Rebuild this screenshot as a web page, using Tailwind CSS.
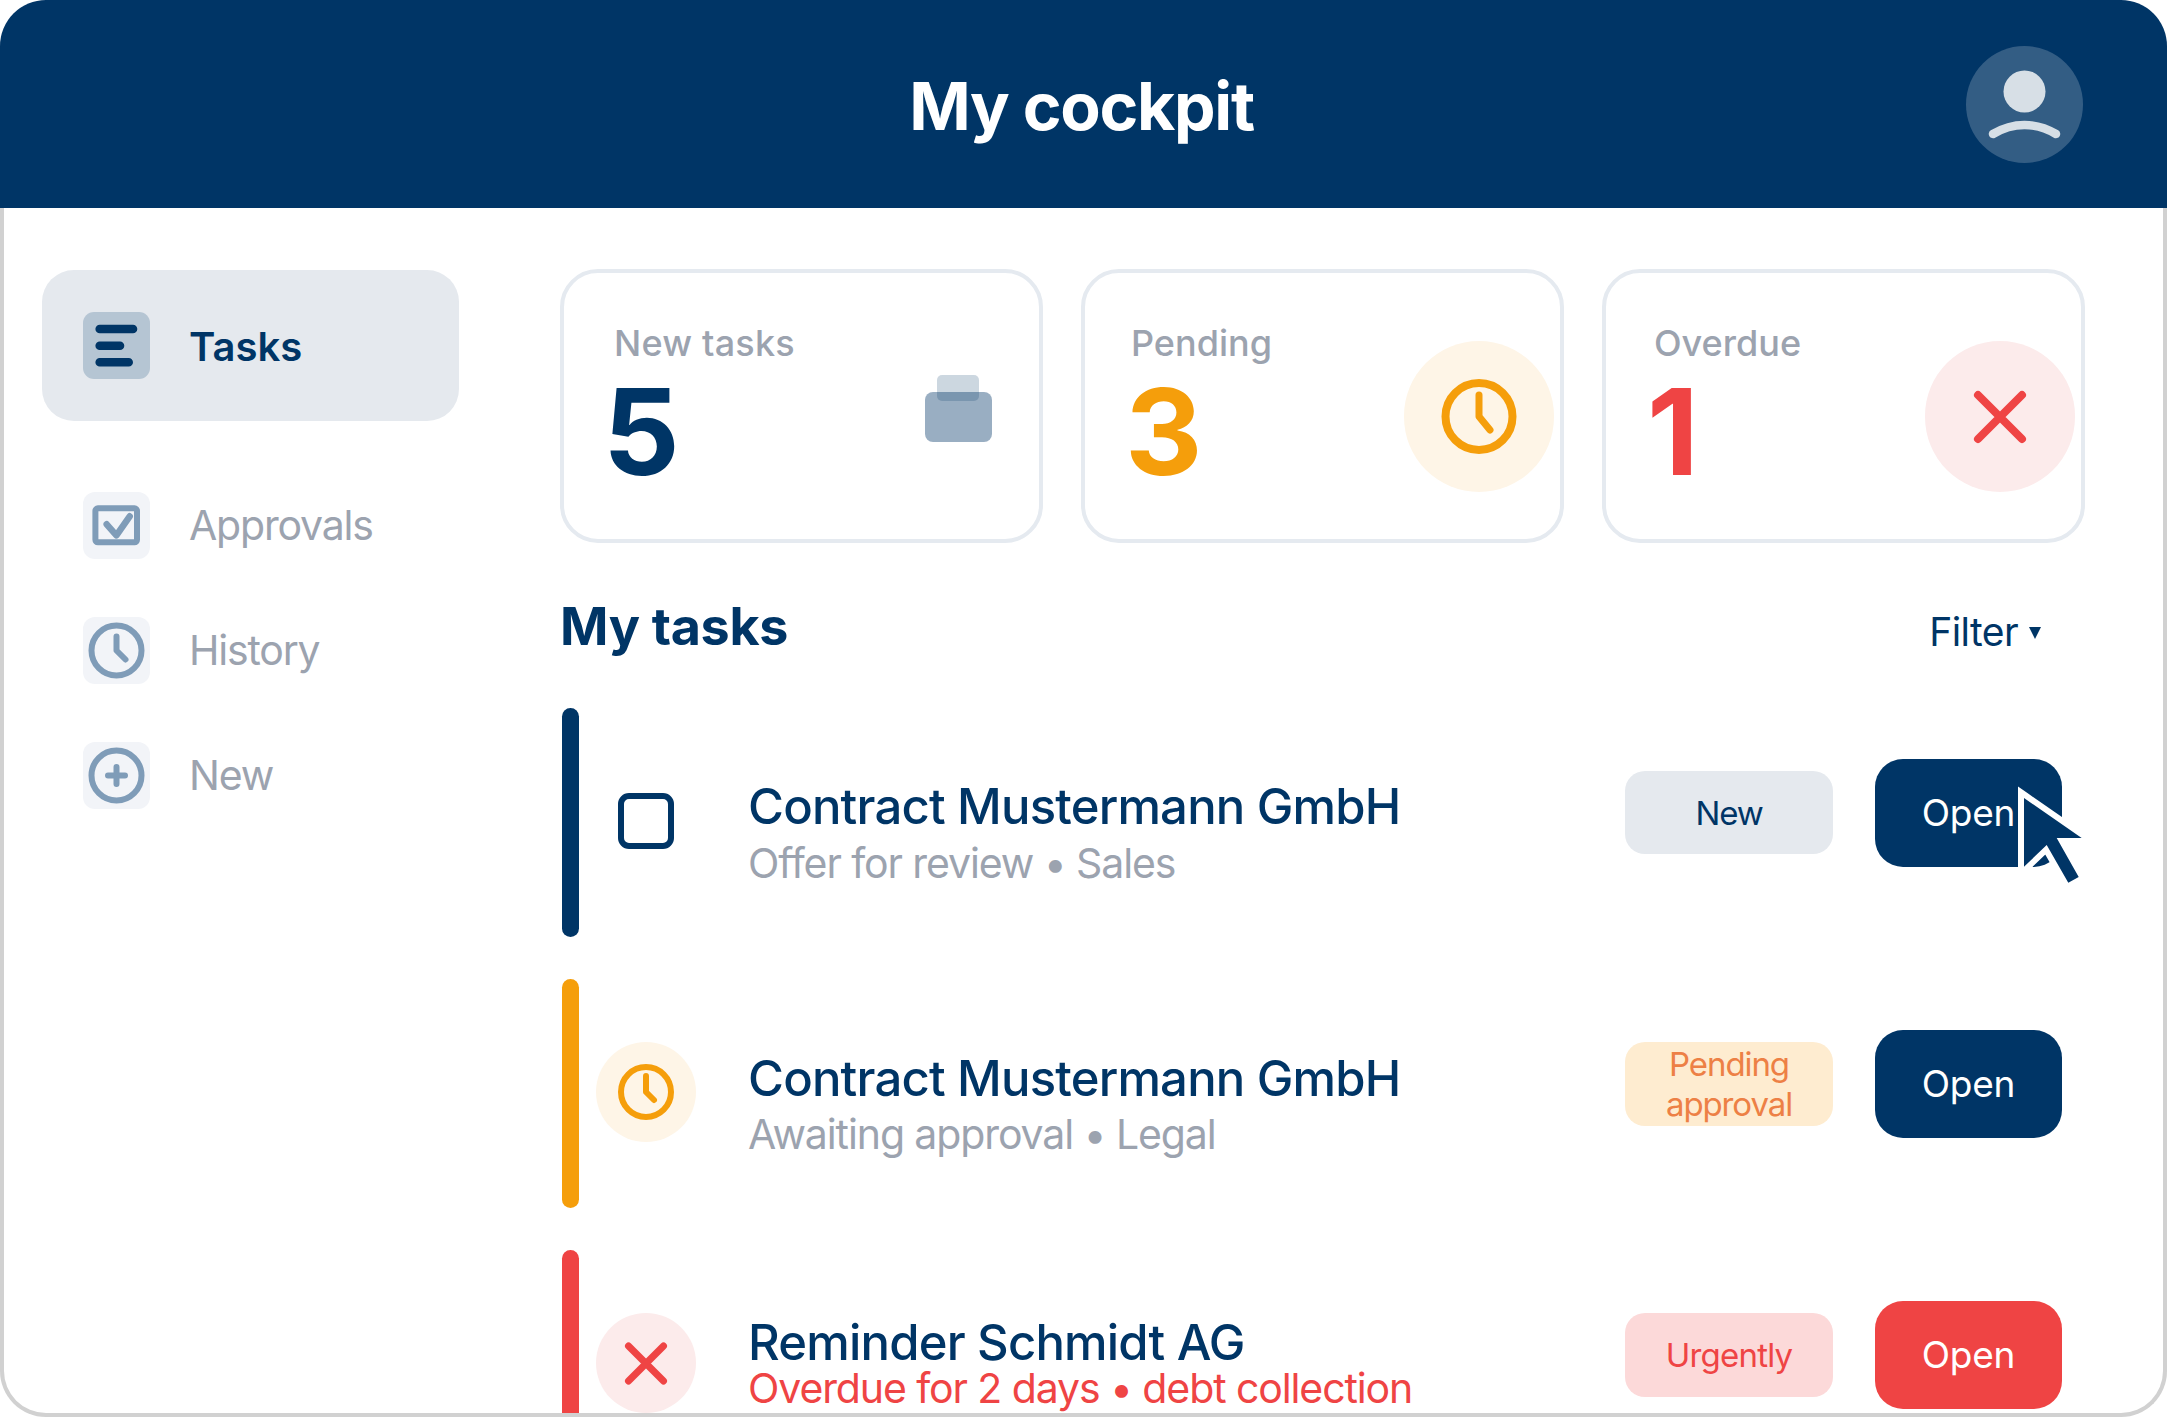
<!DOCTYPE html>
<html lang="en">
<head>
    <meta charset="UTF-8">
    <title>My cockpit</title>
    <script src="https://cdn.jsdelivr.net/npm/@tailwindcss/browser@4"></script>
</head>
<body class="bg-white font-['Inter',sans-serif] overflow-hidden">
<div class="w-[2167px] h-[1417px] flex flex-col">

    <!-- header -->
    <header class="relative h-[208px] shrink-0 bg-[#003566] rounded-t-[46px] flex items-center justify-center">
        <h1 class="text-[66px] leading-[80px] font-bold text-white tracking-[-1.3px] mt-[4px] mr-[4px]">My cockpit</h1>
        <div class="absolute left-[1966px] top-[46px] w-[117px] h-[117px] rounded-full bg-white/20">
            <svg width="117" height="117" viewBox="0 0 117 117" fill="none">
                <circle cx="58.5" cy="45.5" r="21" fill="#d7dfe6"/>
                <path d="M27 88 C47 76 70 76 90 88" stroke="#d7dfe6" stroke-width="8.5" stroke-linecap="round"/>
            </svg>
        </div>
    </header>

    <div class="relative flex-1 flex min-h-0 border-x-4 border-b-4 border-[#d1d1d1] rounded-b-[46px] overflow-hidden bg-white">

        <!-- sidebar -->
        <aside class="w-[417px] ml-[38px] mt-[62px] shrink-0">
            <div class="h-[151px] rounded-[32px] bg-[#e5e9ee] flex items-center pl-[41px]">
                <svg width="67" height="67" viewBox="0 0 67 67" fill="none" class="shrink-0">
                    <rect width="67" height="67" rx="11" fill="#b5c5d3"/>
                    <path d="M16.7 17H50M16.7 33.7H37M16.7 50.3H45.7" stroke="#003566" stroke-width="8.6" stroke-linecap="round"/>
                </svg>
                <span class="ml-[39px] mt-[2px] text-[40px] font-semibold text-[#003566]">Tasks</span>
            </div>
            <div class="mt-[71px] flex flex-col gap-[58px] pl-[41px]">
                <div class="flex items-center h-[67px]">
                    <svg width="67" height="67" viewBox="0 0 67 67" fill="none" class="shrink-0">
                        <rect width="67" height="67" rx="12" fill="#f2f4f8"/>
                        <rect x="12.4" y="16.3" width="41.6" height="34" rx="2.5" stroke="#7f9cb8" stroke-width="6"/>
                        <path d="M23.7 32.3L33.4 43.3L46.7 24.3" stroke="#7f9cb8" stroke-width="6.5" stroke-linecap="round" stroke-linejoin="round"/>
                    </svg>
                    <span class="ml-[39px] text-[41px] tracking-[-1.2px] text-[#9ca3af]">Approvals</span>
                </div>
                <div class="flex items-center h-[67px]">
                    <svg width="67" height="67" viewBox="0 0 67 67" fill="none" class="shrink-0">
                        <rect width="67" height="67" rx="12" fill="#f2f4f8"/>
                        <circle cx="33.5" cy="33.5" r="25" stroke="#7f9cb8" stroke-width="6"/>
                        <path d="M33.5 19.5V33.5L42.5 42.5" stroke="#7f9cb8" stroke-width="6" stroke-linecap="round" stroke-linejoin="round"/>
                    </svg>
                    <span class="ml-[39px] mt-[1px] text-[41px] tracking-[-1.2px] text-[#9ca3af]">History</span>
                </div>
                <div class="flex items-center h-[67px]">
                    <svg width="67" height="67" viewBox="0 0 67 67" fill="none" class="shrink-0">
                        <rect width="67" height="67" rx="12" fill="#f2f4f8"/>
                        <circle cx="33.5" cy="33.5" r="25" stroke="#7f9cb8" stroke-width="6"/>
                        <path d="M25 33.5H42M33.5 25V42" stroke="#7f9cb8" stroke-width="6" stroke-linecap="round"/>
                    </svg>
                    <span class="ml-[39px] text-[41px] tracking-[-1.2px] text-[#9ca3af]">New</span>
                </div>
            </div>
        </aside>

        <!-- main column -->
        <main class="ml-[101px] w-[1525px] shrink-0 pt-[61px]">

            <!-- stat cards -->
            <div class="flex gap-[38px]">
                <div class="w-[483px] h-[274px] box-border rounded-[38px] border-4 border-[#e5eaf0] flex justify-between pr-[6px]">
                    <div class="pl-[49px] pt-[48px]">
                        <p class="pl-[1px] text-[36px] leading-[44px] font-medium tracking-[0.2px] text-[#9ca3af]">New tasks</p>
                        <p class="mt-[7px] -ml-[10px] text-[120px] leading-[120px] font-bold text-[#003566]">5</p>
                    </div>
                    <svg width="150" height="151" viewBox="0 0 150 151" fill="none" class="shrink-0 mt-[68px]">
                        <rect x="42" y="51" width="67" height="50" rx="8" fill="#003566" fill-opacity="0.4"/>
                        <rect x="54" y="34" width="42" height="26" rx="5" fill="#003566" fill-opacity="0.2"/>
                    </svg>
                </div>
                <div class="w-[483px] h-[274px] box-border rounded-[38px] border-4 border-[#e5eaf0] flex justify-between pr-[6px]">
                    <div class="pl-[46px] pt-[48px]">
                        <p class="text-[36px] leading-[44px] font-medium text-[#9ca3af]">Pending</p>
                        <p class="mt-[7px] -ml-[6px] text-[120px] leading-[120px] font-bold text-[#f59e0b]">3</p>
                    </div>
                    <div class="shrink-0 mt-[68px] w-[150px] h-[151px] rounded-full bg-[#fef5e7]">
                        <svg width="150" height="151" viewBox="0 0 150 151" fill="none">
                            <circle cx="75" cy="75.5" r="33.5" stroke="#f59e0b" stroke-width="8"/>
                            <path d="M75 54V75.5L86 89" stroke="#f59e0b" stroke-width="7" stroke-linecap="round" stroke-linejoin="round"/>
                        </svg>
                    </div>
                </div>
                <div class="w-[483px] h-[274px] box-border rounded-[38px] border-4 border-[#e5eaf0] flex justify-between pr-[6px]">
                    <div class="pl-[48px] pt-[48px]">
                        <p class="text-[36px] leading-[44px] font-medium text-[#9ca3af]">Overdue</p>
                        <p class="mt-[7px] -ml-[7px] text-[120px] leading-[120px] font-bold text-[#ef4444]">1</p>
                    </div>
                    <div class="shrink-0 mt-[68px] w-[150px] h-[151px] rounded-full bg-[#fcebeb]">
                        <svg width="150" height="151" viewBox="0 0 150 151" fill="none">
                            <path d="M53 54L97 98M97 54L53 98" stroke="#ef4444" stroke-width="8" stroke-linecap="round"/>
                        </svg>
                    </div>
                </div>
            </div>

            <!-- list heading -->
            <div class="mt-[50px] h-[66px] flex items-center justify-between pr-[44px]">
                <h2 class="mt-[2px] text-[52px] font-bold tracking-[-0.3px] text-[#003566] leading-[66px]">My tasks</h2>
                <div class="flex items-center gap-[11px] mt-[12px]">
                    <span class="text-[39px] leading-[50px] tracking-[-0.6px] text-[#003566]">Filter</span>
                    <svg width="12" height="13" viewBox="0 0 12 13"><path d="M0 1H12L6 13Z" fill="#003566"/></svg>
                </div>
            </div>

            <!-- task rows -->
            <div class="mt-[49px] flex flex-col gap-[42px]">

                <div class="relative h-[229px] flex items-center shrink-0">
                    <div class="ml-[2px] w-[17px] h-full rounded-full bg-[#003566]"></div>
                    <svg width="100" height="100" viewBox="0 0 100 100" fill="none" class="ml-[17px] shrink-0 mb-[3px]">
                        <rect x="25" y="25" width="50" height="50" rx="8" stroke="#003566" stroke-width="6"/>
                    </svg>
                    <div class="ml-[52px] flex-1 mt-[24px]">
                        <p class="text-[49px] leading-[56px] font-medium tracking-[-0.8px] text-[#003566]">Contract Mustermann GmbH</p>
                        <p class="text-[41px] leading-[56px] tracking-[-1.1px] text-[#9ca3af]">Offer for review • Sales</p>
                    </div>
                    <div class="mr-[23px] mb-[20px] flex items-center gap-[42px]">
                        <span class="w-[208px] h-[83px] rounded-[20px] bg-[#e5e9ee] flex items-center justify-center text-center text-[33px] leading-[40px] tracking-[-1.1px] text-[#003566]">New</span>
                        <button class="w-[187px] h-[108px] rounded-[28px] bg-[#003566] text-white text-[37px] tracking-[-0.2px]">Open</button>
                    </div>
                    <!-- mouse pointer over the first button -->
                    <svg width="90" height="110" viewBox="0 0 90 110" fill="none" class="absolute left-[1456px] top-[78px] overflow-visible">
                        <path d="M8 12L65.7 52H40.7L62.7 91L52.3 96.7L30.7 59L8 80.7Z" fill="#003566" stroke="#fff" stroke-width="12" paint-order="stroke" stroke-linejoin="miter" stroke-miterlimit="10"/>
                    </svg>
                </div>

                <div class="h-[229px] flex items-center shrink-0">
                    <div class="ml-[2px] w-[17px] h-full rounded-full bg-[#f59e0b]"></div>
                    <div class="ml-[17px] shrink-0 mb-[3px] w-[100px] h-[100px] rounded-full bg-[#fef5e7]">
                        <svg width="100" height="100" viewBox="0 0 100 100" fill="none">
                            <circle cx="50" cy="50" r="25" stroke="#f59e0b" stroke-width="6"/>
                            <path d="M50 34V50L58 58" stroke="#f59e0b" stroke-width="6" stroke-linecap="round" stroke-linejoin="round"/>
                        </svg>
                    </div>
                    <div class="ml-[52px] flex-1 mt-[24px]">
                        <p class="text-[49px] leading-[56px] font-medium tracking-[-0.8px] text-[#003566]">Contract Mustermann GmbH</p>
                        <p class="text-[41px] leading-[54px] tracking-[-1.1px] text-[#9ca3af]">Awaiting approval • Legal</p>
                    </div>
                    <div class="mr-[23px] mb-[20px] flex items-center gap-[42px]">
                        <span class="w-[208px] h-[84px] rounded-[20px] bg-[#feecd0] flex items-center justify-center text-center text-[33px] leading-[40px] tracking-[-1.1px] text-[#ed8045]">Pending<br>approval</span>
                        <button class="w-[187px] h-[108px] rounded-[28px] bg-[#003566] text-white text-[37px] tracking-[-0.2px]">Open</button>
                    </div>
                </div>

                <div class="h-[229px] flex items-center shrink-0">
                    <div class="ml-[2px] w-[17px] h-full rounded-full bg-[#ef4444]"></div>
                    <div class="ml-[17px] shrink-0 mb-[3px] w-[100px] h-[100px] rounded-full bg-[#fcebeb]">
                        <svg width="100" height="100" viewBox="0 0 100 100" fill="none">
                            <path d="M32.5 33L67.5 68M67.5 33L32.5 68" stroke="#ef4444" stroke-width="7" stroke-linecap="round"/>
                        </svg>
                    </div>
                    <div class="ml-[52px] flex-1 mb-[1px]">
                        <p class="text-[49px] leading-[48px] font-medium tracking-[-0.8px] text-[#003566]">Reminder Schmidt AG</p>
                        <p class="text-[41px] leading-[42px] tracking-[-1.1px] text-[#ef4444]">Overdue for 2 days • debt collection</p>
                    </div>
                    <div class="mr-[23px] mb-[20px] flex items-center gap-[42px]">
                        <span class="w-[208px] h-[84px] rounded-[20px] bg-[#fcd9d9] flex items-center justify-center text-center text-[33px] leading-[40px] tracking-[-0.8px] text-[#ef4444]">Urgently</span>
                        <button class="w-[187px] h-[108px] rounded-[28px] bg-[#ef4444] text-white text-[37px] tracking-[-0.2px]">Open</button>
                    </div>
                </div>
            </div>
        </main>
    </div>
</div>
</body>
</html>
